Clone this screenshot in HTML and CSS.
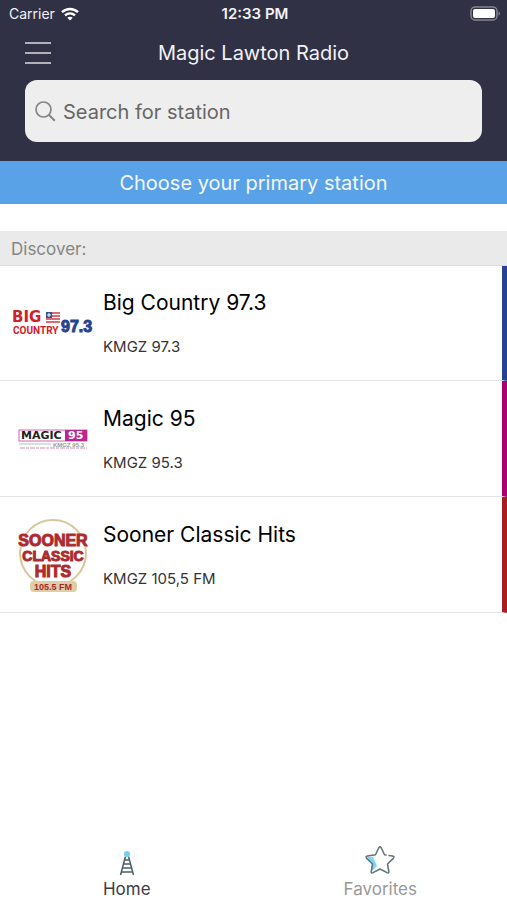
FILE: index.html
```html
<!DOCTYPE html>
<html lang="en">

<head>
    <meta charset="utf-8">
    <meta name="viewport" content="width=device-width, initial-scale=1">
    <title>Magic Lawton Radio</title>
    <link rel="stylesheet" href="styles.css">
</head>

<body>
    <header class="header">
        <div class="status">
            <div class="carrier">
                <span>Carrier</span>
                <svg width="18" height="14" viewBox="0 0 18 14" fill="none" stroke="#fff" stroke-width="2.4">
                    <path d="M1 5.2c4.6-4.3 11.400-4.300 16 0" />
                    <path d="M4 8.400c3-2.700 7-2.700 10 0" />
                    <path d="M6.300 10.700c1.600-1.400 3.800-1.400 5.400 0L9 13.600z" fill="#fff" stroke="none" />
                </svg>
            </div>
            <div class="time">12:33 PM</div>
            <svg class="battery" width="31" height="15" viewBox="0 0 31 15">
                <rect x="1" y="1" width="26" height="13" rx="4" fill="none" stroke="#85858f" stroke-width="1.500" />
                <rect x="3" y="3" width="22" height="9" rx="2" fill="#fff" />
                <path d="M28.500 5.500c2 .8 2 3.200 0 4z" fill="#85858f" />
            </svg>
        </div>
        <div class="title-bar">
            <button class="menu" type="button" aria-label="Menu">
                <svg width="26" height="22" viewBox="0 0 26 22" stroke="#dcdce4" stroke-width="1.500">
                    <path d="M0 1h26M0 11h26M0 21h26" />
                </svg>
            </button>
            <h1 class="title">Magic Lawton Radio</h1>
        </div>
        <form class="search">
            <label for="station" aria-label="Search for station">
                <svg width="21" height="21" viewBox="0 0 21 21" fill="none" stroke="#858585" stroke-width="1.700">
                    <circle cx="8.500" cy="8.500" r="7.500" />
                    <path d="M13.800 13.800l6 6" stroke-width="2" />
                </svg>
            </label>
            <input type="text" id="station" name="station" placeholder="Search for station">
        </form>
    </header>

    <main class="content">
        <p class="banner">Choose your primary station</p>
        <h2 class="section">Discover:</h2>
        <ul class="stations">
            <li class="station blue">
                <svg class="logo" width="82" height="82" viewBox="0 0 82 82">
                    <text class="logo-big" x="0" y="40">BIG</text>
                    <text class="logo-country" x="1" y="52">COUNTRY</text>
                    <text class="logo-number" x="49" y="50">97.3</text>
                    <path d="M34 31h14M34 34h14M34 37h14M34 40h14" stroke="#d23a40" stroke-width="1.500" />
                    <rect x="34" y="30" width="6" height="6" fill="#31539a" />
                    <path d="M37 31v4M35 33h4" stroke="#fff" />
                </svg>
                <div class="info">
                    <h3>Big Country 97.3</h3>
                    <p>KMGZ 97.3</p>
                </div>
            </li>
            <li class="station pink">
                <svg class="logo" width="82" height="82" viewBox="0 0 82 82">
                    <rect x="7" y="32" width="68" height="11" fill="#fff" stroke="#cf65ae" />
                    <rect x="53" y="32" width="22" height="11" fill="#bd2590" />
                    <text class="logo-magic" x="9" y="41">MAGIC</text>
                    <text class="logo-95" x="56" y="41">95</text>
                    <path d="M7 46h32" stroke="#bbb" />
                    <text class="logo-kmgz" x="41" y="49">KMGZ 95.3</text>
                    <path d="M8 50h67" stroke="#d487ba" stroke-dasharray="5 1 3 1" />
                </svg>
                <div class="info">
                    <h3>Magic 95</h3>
                    <p>KMGZ 95.3</p>
                </div>
            </li>
            <li class="station red">
                <svg class="logo" width="82" height="82" viewBox="0 0 82 82">
                    <circle cx="41" cy="39" r="33" fill="#fff" stroke="#dac69c" stroke-width="2" />
                    <rect x="18" y="67" width="47" height="11" rx="4" fill="#dfcda5" />
                    <path d="M6 20h70v13H6zM11 36h60v12H11z" fill="#fff" />
                    <text class="logo-sooner" x="41" y="32">SOONER</text>
                    <text class="logo-classic" x="41" y="47">CLASSIC</text>
                    <text class="logo-sooner" x="41" y="63">HITS</text>
                    <text class="logo-fm" x="41" y="76">105.5 FM</text>
                </svg>
                <div class="info">
                    <h3>Sooner Classic Hits</h3>
                    <p>KMGZ 105,5 FM</p>
                </div>
            </li>
        </ul>
    </main>

    <nav class="tabs">
        <a class="tab active" href="#home">
            <svg width="32" height="32" viewBox="0 0 32 32" fill="none" stroke="#4b5f6c" stroke-width="1.500">
                <path d="M14.500 10.500L9.500 29M17.500 10.500l5 18.500M14 14h4M13 18h6M12 22h8M10.500 26h11" />
                <circle cx="16" cy="8" r="3" fill="#72cff2" stroke="none" />
                <path d="M10 4c-2 2-2 6 0 8M22 4c2 2 2 6 0 8" stroke="#f3f5f7" />
            </svg>
            <span>Home</span>
        </a>
        <a class="tab" href="#favorites">
            <svg width="32" height="32" viewBox="0 0 32 32" fill="none" stroke="#60717c" stroke-width="1.500" stroke-linejoin="round" stroke-linecap="round">
                <path d="M3 11h6l4 9-6 6 1-8z" fill="#7ed5f7" stroke="none" />
                <path d="M25 9.500l3.500.5q2.500.5.8 2.400L23.500 18l1.300 7.500q.2 2.200-1.800 1.200L16 23l-7 3.700q-2 1-1.800-1.200L8.500 18l-5.800-5.600Q1 10.500 3.500 10l8-1.200 3.300-7q1.200-2 2.400 0l3.300 7 1.500.3" />
            </svg>
            <span>Favorites</span>
        </a>
    </nav>
</body>

</html>
```

FILE: styles.css
```css
* {
    box-sizing: border-box;
}

body {
    display: flex;
    flex-direction: column;
    min-height: 100vh;
    margin: 0;
    background: #fff;
    color: #000;
    font-family: Inter, "Liberation Sans", sans-serif;
}

h1, h2, h3, p, ul {
    margin: 0;
    padding: 0;
    font-weight: normal;
}

.header {
    padding-bottom: 19px;
    background: #303144;
    color: #f2f2f8;
}

.status {
    display: grid;
    grid-template-columns: 1fr auto 1fr;
    align-items: center;
    height: 27px;
    padding: 0 6px 0 9px;
    font-size: 14px;
}

.carrier {
    display: flex;
    align-items: center;
    gap: 6px;
}

.time {
    font-size: 15px;
    font-weight: 600;
}

.battery {
    justify-self: end;
}

.title-bar {
    display: grid;
    grid-template-columns: 26px 1fr 26px;
    align-items: center;
    height: 53px;
    padding: 0 25px 2px;
}

.menu {
    display: flex;
    padding: 0;
    border: none;
    background: none;
}

.title {
    font-size: 20px;
    text-align: center;
}

.search {
    display: flex;
    align-items: center;
    gap: 7px;
    height: 62px;
    margin: 0 25px;
    padding: 0 10px;
    border-radius: 12px;
    background: #eee;
}

.search label {
    display: flex;
}

.search input {
    flex: 1;
    min-width: 0;
    padding: 2px 0 0;
    border: none;
    outline: none;
    background: none;
    color: #666;
    font-family: inherit;
    font-size: 20px;
}

.search input::placeholder {
    color: #666;
    opacity: 1;
}

.content {
    flex: 1;
}

.banner {
    padding-top: 2px;
    background: #5aa2e7;
    color: #f2f7fc;
    font-size: 20px;
    line-height: 41px;
    text-align: center;
}

.section {
    margin-top: 27px;
    padding: 2px 0 0 11px;
    border-bottom: 1px solid #dcdedc;
    background: #eaeaea;
    color: #858585;
    font-size: 17px;
    line-height: 32px;
}

.stations {
    list-style: none;
}

.station {
    display: flex;
    align-items: center;
    gap: 9px;
    height: 115px;
    padding-left: 12px;
    border-bottom: 1px solid #e4e4e4;
    border-right: 5px solid;
}

.station + .station {
    height: 116px;
}

/* station colour on the right edge */
.blue {
    border-right-color: #264391;
}

.pink {
    border-right-color: #b0006f;
}

.red {
    border-right-color: #a91c24;
}

.info {
    padding-top: 2px;
}

.info h3 {
    font-size: 21px;
    line-height: 28px;
}

.info p {
    margin-top: 18px;
    color: #333;
    font-size: 15px;
    line-height: 24px;
}

/* logos */
.logo text {
    font-family: "Liberation Sans", sans-serif;
    font-weight: bold;
}

.logo .logo-big {
    fill: #d1202a;
    font-family: "DejaVu Sans", sans-serif;
    font-size: 15px;
}

.logo .logo-country {
    fill: #d1202a;
    font-family: Roboto, sans-serif;
    font-size: 10px;
}

.logo .logo-number {
    fill: #29448f;
    stroke: #29448f;
    font-size: 16px;
}

.logo .logo-magic {
    fill: #222;
    font-family: "DejaVu Sans", sans-serif;
    font-size: 11px;
}

.logo .logo-95 {
    fill: #fff;
    font-family: "DejaVu Sans", sans-serif;
    font-size: 11px;
}

.logo .logo-kmgz {
    fill: #999;
    font-size: 6px;
}

.logo .logo-sooner {
    fill: #ad2a2e;
    stroke: #ad2a2e;
    font-size: 16px;
    text-anchor: middle;
}

.logo .logo-classic {
    fill: #ad2a2e;
    stroke: #ad2a2e;
    font-size: 14px;
    text-anchor: middle;
}

.logo .logo-fm {
    fill: #a8282b;
    font-size: 9px;
    text-anchor: middle;
}

/* bottom menu */
.tabs {
    display: flex;
}

.tab {
    display: flex;
    flex: 1;
    flex-direction: column;
    align-items: center;
    color: #999;
    font-size: 17px;
    line-height: 22px;
    text-decoration: none;
}

.tab.active {
    color: #3c3c44;
}
```
